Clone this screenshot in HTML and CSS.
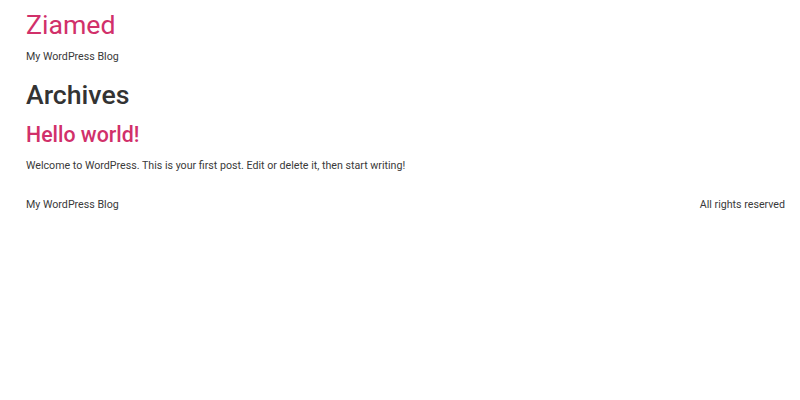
FILE: index.html
```html
<!DOCTYPE html>
<html lang="en">
<head>
<meta charset="utf-8">
<title>Archives – Ziamed</title>
<link rel="stylesheet" href="styles.css">
</head>
<body>
<div class="site">
  <header class="site-header">
    <a class="site-title" href="#">Ziamed</a>
    <p class="site-description">My WordPress Blog</p>
  </header>
  <main class="site-main">
    <h1 class="page-title">Archives</h1>
    <article class="post">
      <h2 class="entry-title"><a href="#">Hello world!</a></h2>
      <p class="entry-summary">Welcome to WordPress. This is your first post. Edit or delete it, then start writing!</p>
    </article>
  </main>
  <footer class="site-footer">
    <span class="footer-left">My WordPress Blog</span>
    <span class="footer-right">All rights reserved</span>
  </footer>
</div>
</body>
</html>
```
FILE: styles.css
```css
html, body {
  margin: 0;
  padding: 0;
  background: #fff;
}
body {
  font-family: Roboto, "Liberation Sans", sans-serif;
  font-size: 10.67px;
  line-height: 16px;
  color: #3a3a3a;
}
a {
  color: #d1306a;
  text-decoration: none;
}
.site {
  padding: 8px 15px 0 26px;
}
.site-header {
  display: flex;
  flex-direction: column;
}
.site-title {
  font-size: 26.67px;
  line-height: 34px;
}
.site-description {
  margin: 7px 0 0;
}
.page-title {
  margin: 13px 0 0;
  font-size: 26.67px;
  line-height: 34px;
  font-weight: 500;
  color: #333;
}
.entry-title {
  margin: 9px 0 0;
  font-size: 21.33px;
  line-height: 28px;
  font-weight: 500;
}
.entry-summary {
  margin: 9px 0 0;
}
.site-footer {
  margin-top: 23px;
  display: flex;
  justify-content: space-between;
}
```
